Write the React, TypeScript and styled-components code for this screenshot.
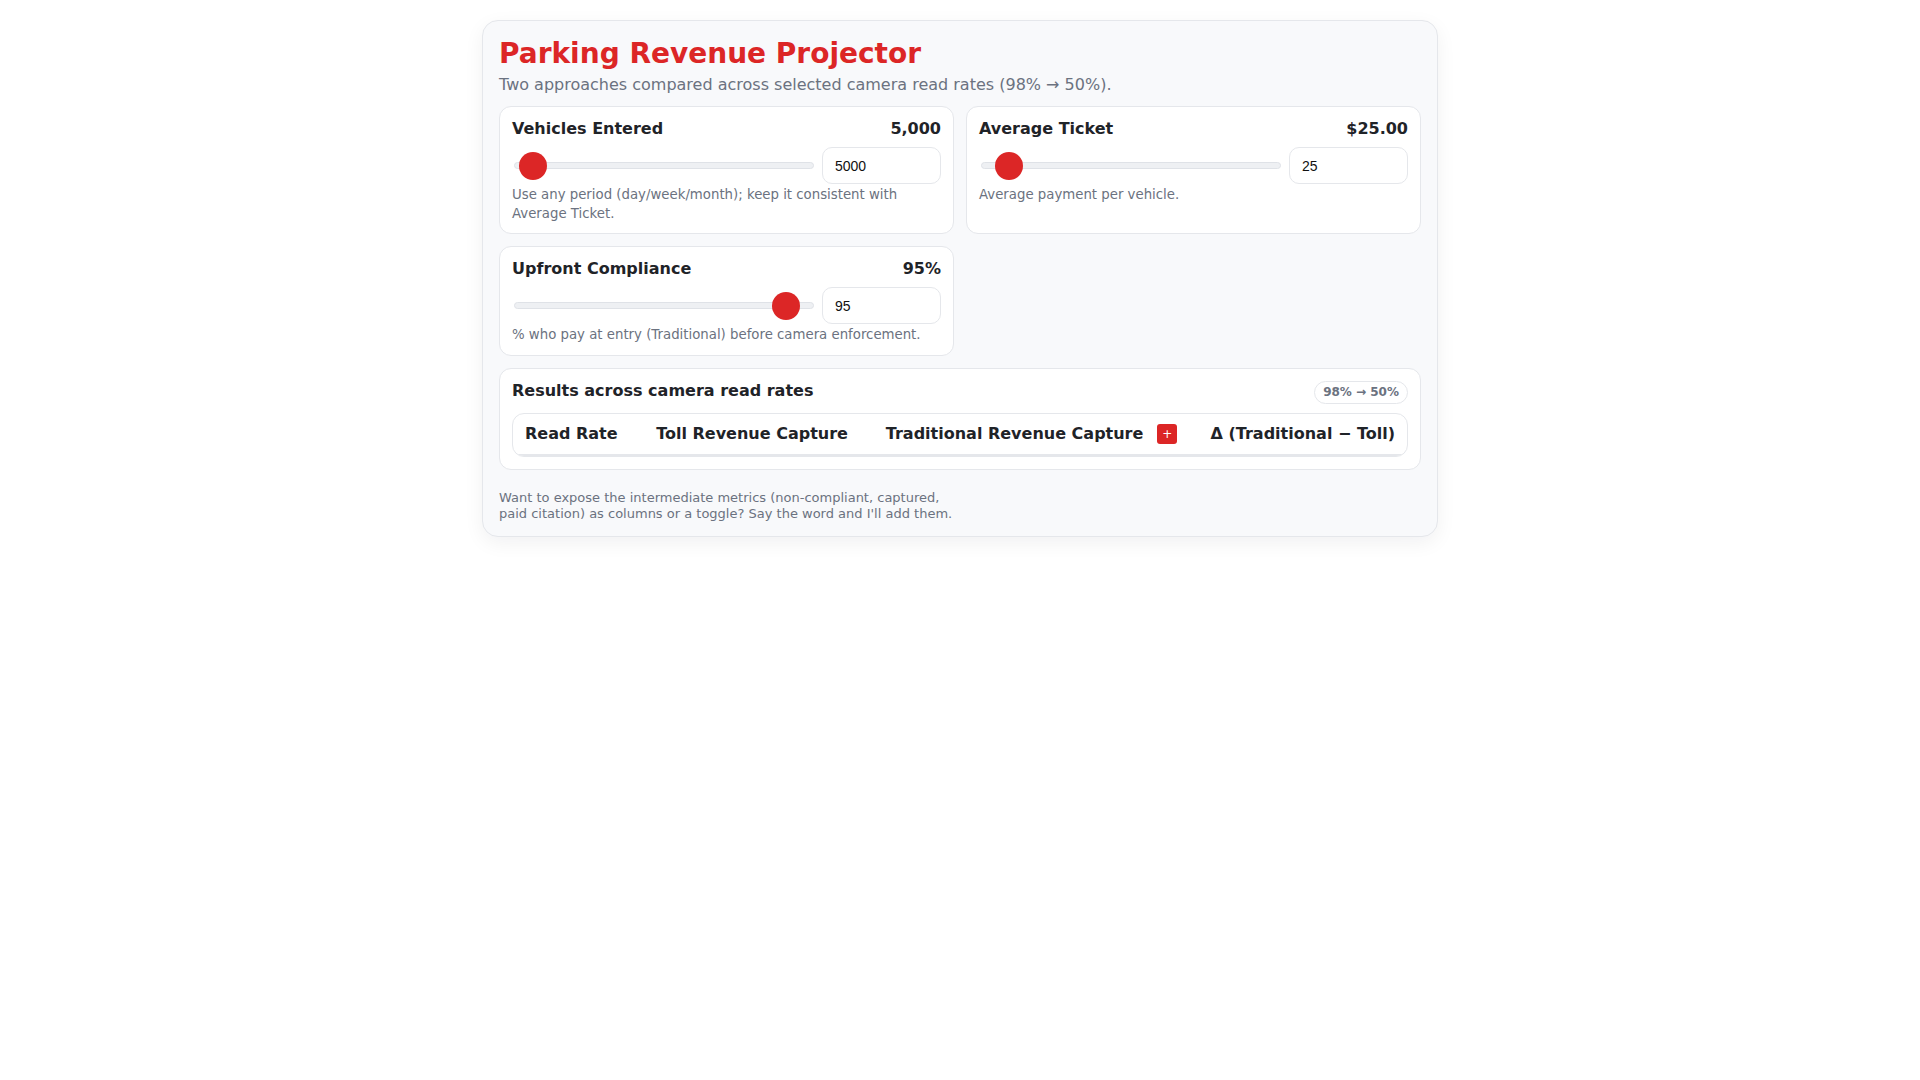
import React, { useState } from 'react';
import styled, { createGlobalStyle } from 'styled-components';

const GlobalStyle = createGlobalStyle`
  html, body {
    margin: 0;
    padding: 0;
    background: #ffffff;
  }
  body {
    font-family: "DejaVu Sans", Verdana, sans-serif;
    color: #1f2328;
  }
  * {
    box-sizing: border-box;
  }
`;

const Shell = styled.div`
  width: 956px;
  margin: 20px auto;
  padding: 16px 16px 13px;
  background: #f8f9fb;
  border: 1px solid #e5e7eb;
  border-radius: 16px;
  box-shadow: 0 6px 20px rgba(15, 23, 42, 0.06);
`;

const Title = styled.h1`
  margin: 0;
  font-size: 28px;
  line-height: 34px;
  font-weight: 700;
  color: #dc2626;
`;

const Subtitle = styled.p`
  margin: 3px 0 0;
  font-size: 16px;
  line-height: 22px;
  color: #6b7280;
`;

const Grid = styled.div`
  display: grid;
  grid-template-columns: 1fr 1fr;
  gap: 12px;
  margin-top: 10px;
`;

const Card = styled.section<{ $wide?: boolean }>`
  grid-column: ${(p) => (p.$wide ? '1 / -1' : 'auto')};
  background: #ffffff;
  border: 1px solid #e5e7eb;
  border-radius: 12px;
  padding: ${(p) => (p.$wide ? '12px' : '12px 12px 10px')};
`;

const FieldHead = styled.div`
  display: flex;
  justify-content: space-between;
  align-items: baseline;
  font-size: 16px;
  line-height: 19px;
  font-weight: 700;
  color: #1f2328;
`;

const ControlRow = styled.div`
  display: grid;
  grid-template-columns: 1fr 119px;
  column-gap: 6px;
  align-items: center;
  margin-top: 9px;
`;

const Range = styled.input`
  -webkit-appearance: none;
  appearance: none;
  width: auto;
  min-width: 0;
  height: 28px;
  margin: 2px;
  background: transparent;
  cursor: pointer;

  &::-webkit-slider-runnable-track {
    height: 7px;
    background: #eef0f3;
    border: 1px solid #dfe2e7;
    border-radius: 999px;
  }

  &::-webkit-slider-thumb {
    -webkit-appearance: none;
    appearance: none;
    width: 28px;
    height: 28px;
    margin-top: -11.5px;
    border: none;
    border-radius: 50%;
    background: #dc2626;
  }

  &:focus {
    outline: none;
  }
`;

const NumberBox = styled.input`
  width: 100%;
  height: 37px;
  padding: 0 12px;
  border: 1px solid #e5e7eb;
  border-radius: 10px;
  background: #ffffff;
  font-family: "Liberation Sans", Arial, sans-serif;
  font-size: 14px;
  color: #111111;
  -moz-appearance: textfield;

  &::-webkit-outer-spin-button,
  &::-webkit-inner-spin-button {
    -webkit-appearance: none;
    margin: 0;
  }

  &:focus {
    outline: none;
    border-color: #dc2626;
  }
`;

const Help = styled.p`
  margin: 2px 0 0;
  font-size: 13.3px;
  line-height: 18.6px;
  color: #6b7280;
`;

const ResultsHead = styled.div`
  display: flex;
  justify-content: space-between;
  align-items: flex-start;
`;

const ResultsTitle = styled.h2`
  margin: 0;
  font-size: 16px;
  line-height: 19px;
  font-weight: 700;
  color: #1f2328;
`;

const Pill = styled.span`
  padding: 3px 8px;
  border: 1px solid #e5e7eb;
  border-radius: 999px;
  background: #ffffff;
  font-size: 12px;
  line-height: 15px;
  font-weight: 700;
  color: #6b7280;
`;

const TableWrap = styled.div`
  margin-top: 9px;
  border: 1px solid #e5e7eb;
  border-radius: 12px;
  overflow: hidden;
  background: #ffffff;
`;

const Table = styled.table`
  width: 100%;
  border-collapse: collapse;
`;

const Th = styled.th<{ $align?: 'left' | 'right' }>`
  padding: 10px 12px;
  font-size: 16px;
  line-height: 19px;
  font-weight: 700;
  color: #1f2328;
  text-align: ${(p) => p.$align ?? 'right'};
  white-space: nowrap;
  border-bottom: 2px solid #e5e7eb;
`;

const HeadWithAction = styled.span`
  display: inline-flex;
  align-items: center;
  gap: 14px;
`;

const AddButton = styled.button`
  display: inline-flex;
  align-items: center;
  justify-content: center;
  width: 20px;
  height: 20px;
  padding: 0;
  border: none;
  border-radius: 3px;
  background: #dc2626;
  color: #ffffff;
  font-family: "DejaVu Sans", sans-serif;
  font-size: 12px;
  line-height: 1;
  cursor: pointer;
`;

const Note = styled.p`
  max-width: 455px;
  margin: 20px 0 0;
  font-size: 13px;
  line-height: 16.6px;
  color: #6b7280;
`;

type FieldProps = {
  label: string;
  display: string;
  value: number;
  min: number;
  max: number;
  step: number;
  help: string;
  onChange: (v: number) => void;
};

function Field({ label, display, value, min, max, step, help, onChange }: FieldProps) {
  return (
    <Card>
      <FieldHead>
        <span>{label}</span>
        <span>{display}</span>
      </FieldHead>
      <ControlRow>
        <Range
          type="range"
          min={min}
          max={max}
          step={step}
          value={value}
          onChange={(e) => onChange(Number(e.target.value))}
        />
        <NumberBox
          type="number"
          value={value}
          onChange={(e) => onChange(Number(e.target.value))}
        />
      </ControlRow>
      <Help>{help}</Help>
    </Card>
  );
}

export default function App() {
  const [vehicles, setVehicles] = useState(5000);
  const [ticket, setTicket] = useState(25);
  const [compliance, setCompliance] = useState(95);

  return (
    <>
      <GlobalStyle />
      <Shell>
        <Title>Parking Revenue Projector</Title>
        <Subtitle>Two approaches compared across selected camera read rates (98% → 50%).</Subtitle>

        <Grid>
          <Field
            label="Vehicles Entered"
            display={vehicles.toLocaleString('en-US')}
            value={vehicles}
            min={100}
            max={300000}
            step={100}
            help="Use any period (day/week/month); keep it consistent with Average Ticket."
            onChange={setVehicles}
          />
          <Field
            label="Average Ticket"
            display={`$${ticket.toFixed(2)}`}
            value={ticket}
            min={1}
            max={500}
            step={1}
            help="Average payment per vehicle."
            onChange={setTicket}
          />
          <Field
            label="Upfront Compliance"
            display={`${compliance}%`}
            value={compliance}
            min={0}
            max={100}
            step={1}
            help="% who pay at entry (Traditional) before camera enforcement."
            onChange={setCompliance}
          />

          <Card $wide>
            <ResultsHead>
              <ResultsTitle>Results across camera read rates</ResultsTitle>
              <Pill>98% → 50%</Pill>
            </ResultsHead>
            <TableWrap>
              <Table>
                <thead>
                  <tr>
                    <Th $align="left">Read Rate</Th>
                    <Th>Toll Revenue Capture</Th>
                    <Th>
                      <HeadWithAction>
                        Traditional Revenue Capture
                        <AddButton type="button" aria-label="Add column">+</AddButton>
                      </HeadWithAction>
                    </Th>
                    <Th>Δ (Traditional − Toll)</Th>
                  </tr>
                </thead>
                <tbody />
              </Table>
            </TableWrap>
          </Card>
        </Grid>

        <Note>
          Want to expose the intermediate metrics (non-compliant, captured, paid citation) as
          columns or a toggle? Say the word and I'll add them.
        </Note>
      </Shell>
    </>
  );
}
